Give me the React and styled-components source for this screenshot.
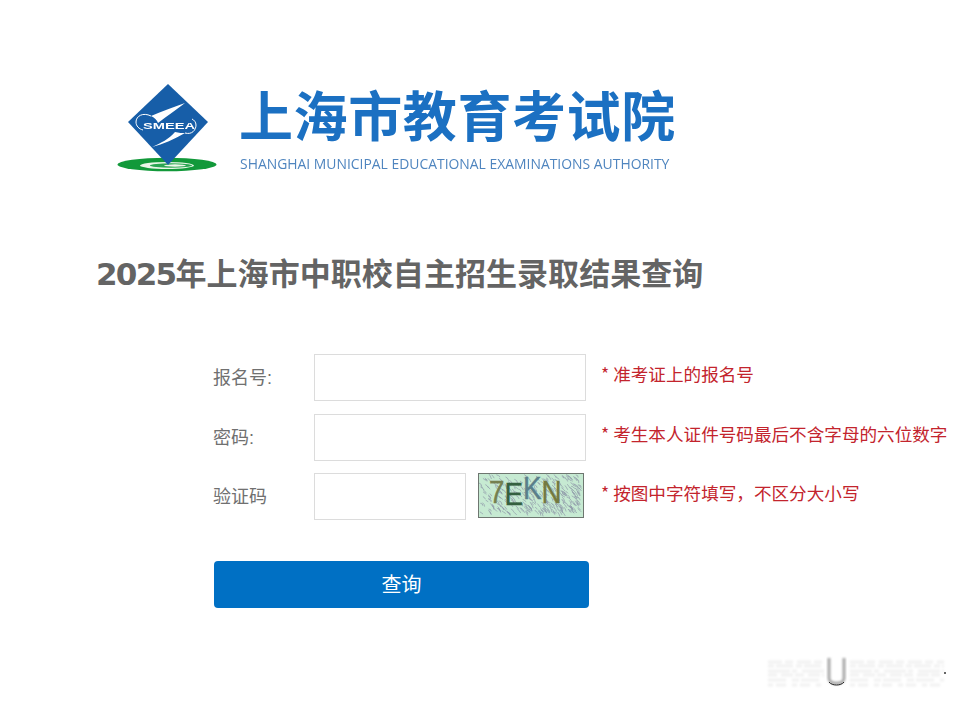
import React from 'react';
import styled, { createGlobalStyle } from 'styled-components';

const CJK = '"Noto Sans CJK SC", "Liberation Sans", sans-serif';

const GlobalStyle = createGlobalStyle`
  html, body {
    margin: 0;
    padding: 0;
    background: #fff;
  }
  * {
    box-sizing: border-box;
  }
`;

const Page = styled.div`
  position: relative;
  width: 967px;
  height: 705px;
  overflow: hidden;
  font-family: ${CJK};
`;

const Header = styled.header`
  display: flex;
  align-items: flex-start;
  padding: 83px 0 0 117px;
  gap: 21px;
  height: 255px;
`;

const LogoMark = styled.svg`
  display: block;
  width: 102px;
  height: 91px;
  filter: blur(0.4px);
`;

const Wordmark = styled.div`
  display: flex;
  flex-direction: column;
  filter: blur(0.35px);
`;

const WordmarkCn = styled.div`
  font-size: 54px;
  line-height: 62px;
  height: 72px;
  margin-left: -1px;
  font-weight: 700;
  letter-spacing: 0.6px;
  color: #1b70c2;
  white-space: nowrap;
`;

const WordmarkEn = styled.div`
  font-family: "Open Sans", sans-serif;
  font-size: 13.9px;
  font-weight: 500;
  line-height: 18px;
  color: #4f85bf;
  white-space: nowrap;
  letter-spacing: 0.01px;
`;

const Title = styled.h1`
  margin: 0 0 65px 96px;
  height: 34px;
  font-size: 31px;
  line-height: 34px;
  font-weight: 700;
  letter-spacing: 0.05px;
  color: #646464;
  white-space: nowrap;
  span {
    font-family: "DejaVu Sans", sans-serif;
    letter-spacing: -1.7px;
  }
`;

const Form = styled.form`
  display: flex;
  flex-direction: column;
  padding-left: 213px;
`;

const Row = styled.div`
  display: flex;
  align-items: center;
  height: 47px;
  margin-bottom: ${props => props.$gap}px;
`;

const Label = styled.label`
  flex: 0 0 101px;
  padding-bottom: 3px;
  font-family: "Liberation Sans", "Noto Sans CJK SC", sans-serif;
  font-size: 18px;
  color: #707070;
`;

const Field = styled.input`
  display: block;
  width: ${props => props.$width}px;
  height: 47px;
  padding: 0 8px;
  border: 1px solid #dcdcdc;
  background: #fff;
  outline: none;
`;

const CaptchaImage = styled.svg`
  display: block;
  flex: none;
  width: 106px;
  height: 45px;
  margin: 0 2px 2px 12px;
  border: 1px solid #6e7670;
  overflow: visible;
`;

const Hint = styled.span`
  margin-left: ${props => props.$offset}px;
  padding-bottom: 9px;
  font-size: 17.6px;
  color: #c3242d;
  white-space: nowrap;
`;

const Submit = styled.button`
  display: block;
  width: 375px;
  height: 47px;
  margin: 41px 0 0 1px;
  padding: 0 0 3px;
  border: 0;
  border-radius: 4px;
  background: #0070c4;
  color: #fff;
  font-family: ${CJK};
  font-size: 20px;
  cursor: pointer;
`;

const Watermark = styled.svg`
  position: absolute;
  left: 750px;
  top: 650px;
  width: 217px;
  height: 55px;
`;

function Logo() {
  return (
    <LogoMark viewBox="0 0 102 91" aria-hidden="true">
      <ellipse cx="50" cy="81.5" rx="49.5" ry="6.8" fill="#12993a" />
      <ellipse cx="50" cy="82.5" rx="27" ry="3.4" fill="#eaf6e8" />
      <ellipse cx="54" cy="82.5" rx="21" ry="2.2" fill="#2aa552" />
      <ellipse cx="58" cy="82.5" rx="11" ry="1.2" fill="#eef8ea" />
      <path d="M51 1 L91 39 L51 82 L11 39 Z" fill="#175ea8" />
      <path d="M68 20 C56 24 44 29 34 33 C38 35 40 37 41 40 C50 33 60 26 68 20 Z" fill="#fff" />
      <path d="M35 64 C44 60 52 56 58 49 C62 50 65 50 68 50 C58 56 46 61 35 64 Z" fill="#fff" />
      <path d="M34 33 C26 29 19 33 19 39 C19 43 22 46 26 47" fill="none" stroke="#fff" strokeWidth="1" />
      <path d="M68 50 C75 52 79 47 79 42 C79 39 77 37 75 36" fill="none" stroke="#fff" strokeWidth="1" />
      <text x="26" y="46" fontFamily='"Liberation Sans", sans-serif' fontSize="9" fontWeight="700" fill="#fff" textLength="52" lengthAdjust="spacingAndGlyphs">SMEEA</text>
    </LogoMark>
  );
}

// deterministic crackle for the captcha background
function noiseLines() {
  const lines = [];
  let seed = 17;
  const next = () => {
    seed = (seed * 9301 + 49297) % 233280;
    return seed / 233280;
  };
  for (let i = 0; i < 520; i += 1) {
    const x = next() * 100;
    const y = next() * 38;
    const weight = (x / 106 + y / 45) / 2;
    if (next() < 0.15 + weight) {
      lines.push(
        <path
          key={i}
          d={`M${x} ${y} q${1 + next() * 2} ${next() * 2} ${2 + next() * 2} ${2 + next() * 3}`}
          stroke="#8f9aa9"
          strokeWidth="0.7"
          fill="none"
        />,
      );
    }
  }
  return lines;
}

function Captcha() {
  return (
    <CaptchaImage viewBox="0 0 104 43" aria-label="验证码">
      <rect width="104" height="43" fill="#c6ead2" />
      {noiseLines()}
      <text
        transform="translate(10 0) scale(0.87 1)"
        fontSize="32"
        fontFamily='"Liberation Sans", sans-serif'
        strokeWidth="0.4"
      >
        <tspan y="29" fill="#75804f" stroke="#75804f">7</tspan>
        <tspan y="31" fill="#34603f" stroke="#34603f">E</tspan>
        <tspan y="25" fill="#5a7f8a" stroke="#5a7f8a">K</tspan>
        <tspan y="29" fill="#737a3f" stroke="#737a3f">N</tspan>
      </text>
    </CaptchaImage>
  );
}

// faint smudged strokes either side of the dark mark
const smudges = [
  { y: 12, dash: '14 3 8 4' },
  { y: 16, dash: '6 2 17 3' },
  { y: 21, dash: '22 2 5 5' },
  { y: 25, dash: '9 4 12 2' },
  { y: 30, dash: '18 6 7 2' },
  { y: 35, dash: '5 3 10 6' },
];

function App() {
  return (
    <Page>
      <GlobalStyle />
      <Header>
        <Logo />
        <Wordmark>
          <WordmarkCn>上海市教育考试院</WordmarkCn>
          <WordmarkEn>SHANGHAI MUNICIPAL EDUCATIONAL EXAMINATIONS AUTHORITY</WordmarkEn>
        </Wordmark>
      </Header>
      <Title>
        <span>2025</span>年上海市中职校自主招生录取结果查询
      </Title>
      <Form onSubmit={e => e.preventDefault()}>
        <Row $gap={13}>
          <Label>报名号:</Label>
          <Field $width={272} />
          <Hint $offset={15}>* 准考证上的报名号</Hint>
        </Row>
        <Row $gap={12}>
          <Label>密码:</Label>
          <Field $width={272} />
          <Hint $offset={15}>* 考生本人证件号码最后不含字母的六位数字</Hint>
        </Row>
        <Row $gap={0}>
          <Label>验证码</Label>
          <Field $width={152} />
          <Captcha />
          <Hint $offset={15}>* 按图中字符填写，不区分大小写</Hint>
        </Row>
        <Submit type="submit">查询</Submit>
      </Form>
      <Watermark viewBox="0 0 217 55" aria-hidden="true">
        <defs>
          <filter id="soft" x="-20%" y="-20%" width="140%" height="140%">
            <feGaussianBlur stdDeviation="1.2" />
          </filter>
          <filter id="softer" x="-20%" y="-20%" width="140%" height="140%">
            <feGaussianBlur stdDeviation="0.9" />
          </filter>
          <filter id="edge" x="-20%" y="-50%" width="140%" height="200%">
            <feGaussianBlur stdDeviation="0.4" />
          </filter>
        </defs>
        <g filter="url(#softer)">
          {smudges.map(s => (
            <path key={s.y} d={`M18 ${s.y} H74 M100 ${s.y} H194`} stroke="#f1f1f1" strokeWidth="3" strokeDasharray={s.dash} />
          ))}
        </g>
        <path d="M79 8 V28 C79 35 94 35 94 28 V8" fill="none" stroke="#a8a8a8" strokeWidth="3" filter="url(#soft)" />
        <path d="M79 32 C82 36 91 36 94 32" fill="none" stroke="#222" strokeWidth="1" filter="url(#edge)" />
        <circle cx="195" cy="23" r="1" fill="#333" />
      </Watermark>
    </Page>
  );
}

export default App;
